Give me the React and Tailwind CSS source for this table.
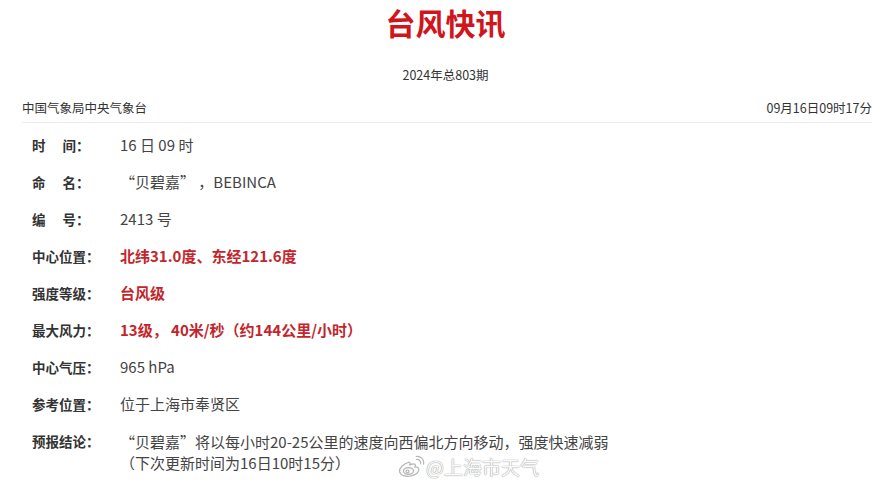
import React from 'react';

const FONT = '"Microsoft YaHei", "Noto Sans CJK SC", "Noto Sans", sans-serif';

const rows = [
  { label: ['时', '间'], value: '16 日 09 时' },
  { label: ['命', '名'], value: '“贝碧嘉” ，BEBINCA' },
  { label: ['编', '号'], value: '2413 号' },
  { label: '中心位置', value: '北纬31.0度、东经121.6度', red: true },
  { label: '强度等级', value: '台风级', red: true },
  { label: '最大风力', value: '13级， 40米/秒（约144公里/小时）', red: true },
  { label: '中心气压', value: '965 hPa' },
  { label: '参考位置', value: '位于上海市奉贤区' },
];

const Label = ({ label }) =>
  Array.isArray(label) ? (
    <span className="w-[88px] shrink-0 text-[13.5px] font-semibold text-[#333]">
      <span>{label[0]}</span>
      <span className="ml-[17px]">{label[1]}：</span>
    </span>
  ) : (
    <span className="w-[88px] shrink-0 text-[13.5px] font-semibold text-[#333]">{label}：</span>
  );

const WeiboLogo = () => (
  <svg width="28" height="24" viewBox="0 0 28 24" fill="none" stroke="#b5b5b5" strokeWidth="1.2">
    <path d="M11 7.5c-4.5 1.5-9 5.5-8.5 9 .6 4 6.5 5.5 11.5 4.5 5-1 8.5-4 7.8-7-.5-2-2.8-2.3-3.8-2 .8-1.8.4-3.3-1.4-3.2-1.4 0-3 .7-3.8 1 .6-1.6.3-3.2-1.8-2.3z" fill="#fafafa" />
    <ellipse cx="11.5" cy="16" rx="5" ry="3.4" />
    <circle cx="10.5" cy="16.4" r="1.4" />
    <path d="M19 4.5c2.8-.6 5.5 1.8 4.6 4.8" />
    <path d="M18.8 1.5c4.8-1 9 3.2 7.6 8.2" />
  </svg>
);

export default function App() {
  return (
    <div className="relative w-[891px] h-[491px] bg-white overflow-hidden" style={{ fontFamily: FONT }}>
      <h1 className="pt-[2px] text-center text-[30px] leading-[40px] font-bold text-[#d0151c]">台风快讯</h1>
      <div className="mt-[25px] text-center text-[12.5px] leading-[16px] text-[#333]">2024年总803期</div>

      <div className="mx-[22px] mr-[19px] mt-[17px] flex justify-between border-b border-[#ececec] pb-[6px] text-[12.5px] leading-[16px] text-[#333]">
        <span>中国气象局中央气象台</span>
        <span>09月16日09时17分</span>
      </div>

      <div className="mt-[4px] pl-[32px]">
        {rows.map((r, i) => (
          <div key={i} className="flex h-[37px] items-center">
            <Label label={r.label} />
            <span className={`text-[15px] ${r.red ? 'font-bold text-[#c2262c]' : 'text-[#444]'}`}>{r.value}</span>
          </div>
        ))}
        <div className="flex items-start pt-[8px] leading-[21px]">
          <Label label="预报结论" />
          <div className="text-[15px] text-[#444]">
            <div>“贝碧嘉”将以每小时20-25公里的速度向西偏北方向移动，强度快速减弱</div>
            <div>（下次更新时间为16日10时15分）</div>
          </div>
        </div>
      </div>

      {/* watermark */}
      <div className="absolute left-[397px] top-[455px] flex items-center gap-[1px]">
        <WeiboLogo />
        <span
          className="text-[19px] leading-[24px] text-[#fbfbfb]"
          style={{ textShadow: '0 0 1px #9a9a9a, 0 0 1px #9a9a9a' }}
        >
          @上海市天气
        </span>
      </div>
    </div>
  );
}
